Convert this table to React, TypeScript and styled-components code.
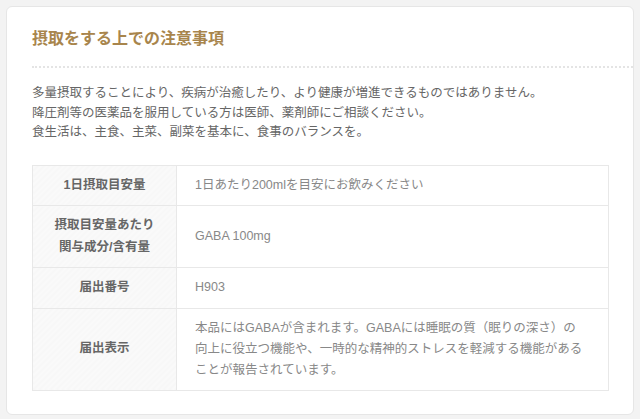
import React from 'react';
import styled, { createGlobalStyle } from 'styled-components';

const GlobalStyle = createGlobalStyle`
	html, body {
		margin: 0;
		padding: 0;
		background: #f3f3f3;
	}
	body {
		font-family: "Liberation Sans", "Noto Sans CJK JP", sans-serif;
	}
`;

const Page = styled.div`
	padding: 6px;
	width: 640px;
	box-sizing: border-box;
`;

const Card = styled.section`
	background: #fff;
	border: 1px solid #e6e6e6;
	border-radius: 6px;
	padding: 20px 24px 23px 25px;
`;

const Title = styled.h2`
	margin: 0 -24px 0 0;
	padding: 0 0 15px 0;
	font-size: 16px;
	line-height: 24px;
	font-weight: bold;
	color: #a8854c;
	border-bottom: 2px dotted #e4e4e4;
`;

const Notes = styled.p`
	margin: 16px 0 22px;
	font-size: 12.5px;
	line-height: 19.5px;
	color: #666;
`;

const Table = styled.table`
	width: 100%;
	border-collapse: collapse;
	table-layout: fixed;
	font-size: 12.5px;
`;

const Label = styled.th`
	width: 144px;
	box-sizing: border-box;
	padding: 9px 6px;
	text-align: center;
	font-weight: bold;
	color: #666;
	line-height: 21.5px;
	border: 1px solid #e8e8e8;
	background: repeating-linear-gradient(
		-45deg,
		#f7f7f7 0,
		#f7f7f7 2px,
		#fafafa 2px,
		#fafafa 4px
	);
`;

const Value = styled.td`
	padding: 9px 10px 9px 18px;
	text-align: left;
	color: #888;
	line-height: 21px;
	white-space: nowrap;
	border: 1px solid #e8e8e8;
	background: #fff;
`;

const rows: { label: React.ReactNode; value: React.ReactNode }[] = [
	{ label: '1日摂取目安量', value: '1日あたり200mlを目安にお飲みください' },
	{
		label: <>摂取目安量あたり<br />関与成分/含有量</>,
		value: 'GABA 100mg',
	},
	{ label: '届出番号', value: 'H903' },
	{
		label: '届出表示',
		value: (
			<>
				本品にはGABAが含まれます。GABAには睡眠の質（眠りの深さ）の<br />
				向上に役立つ機能や、一時的な精神的ストレスを軽減する機能がある<br />
				ことが報告されています。
			</>
		),
	},
];

export default function App(): JSX.Element {
	return (
		<Page>
			<GlobalStyle />
			<Card>
				<Title>摂取をする上での注意事項</Title>
				<Notes>
					多量摂取することにより、疾病が治癒したり、より健康が増進できるものではありません。<br />
					降圧剤等の医薬品を服用している方は医師、薬剤師にご相談ください。<br />
					食生活は、主食、主菜、副菜を基本に、食事のバランスを。
				</Notes>
				<Table>
					<tbody>
						{rows.map((r, i) => (
							<tr key={i}>
								<Label>{r.label}</Label>
								<Value>{r.value}</Value>
							</tr>
						))}
					</tbody>
				</Table>
			</Card>
		</Page>
	);
}
